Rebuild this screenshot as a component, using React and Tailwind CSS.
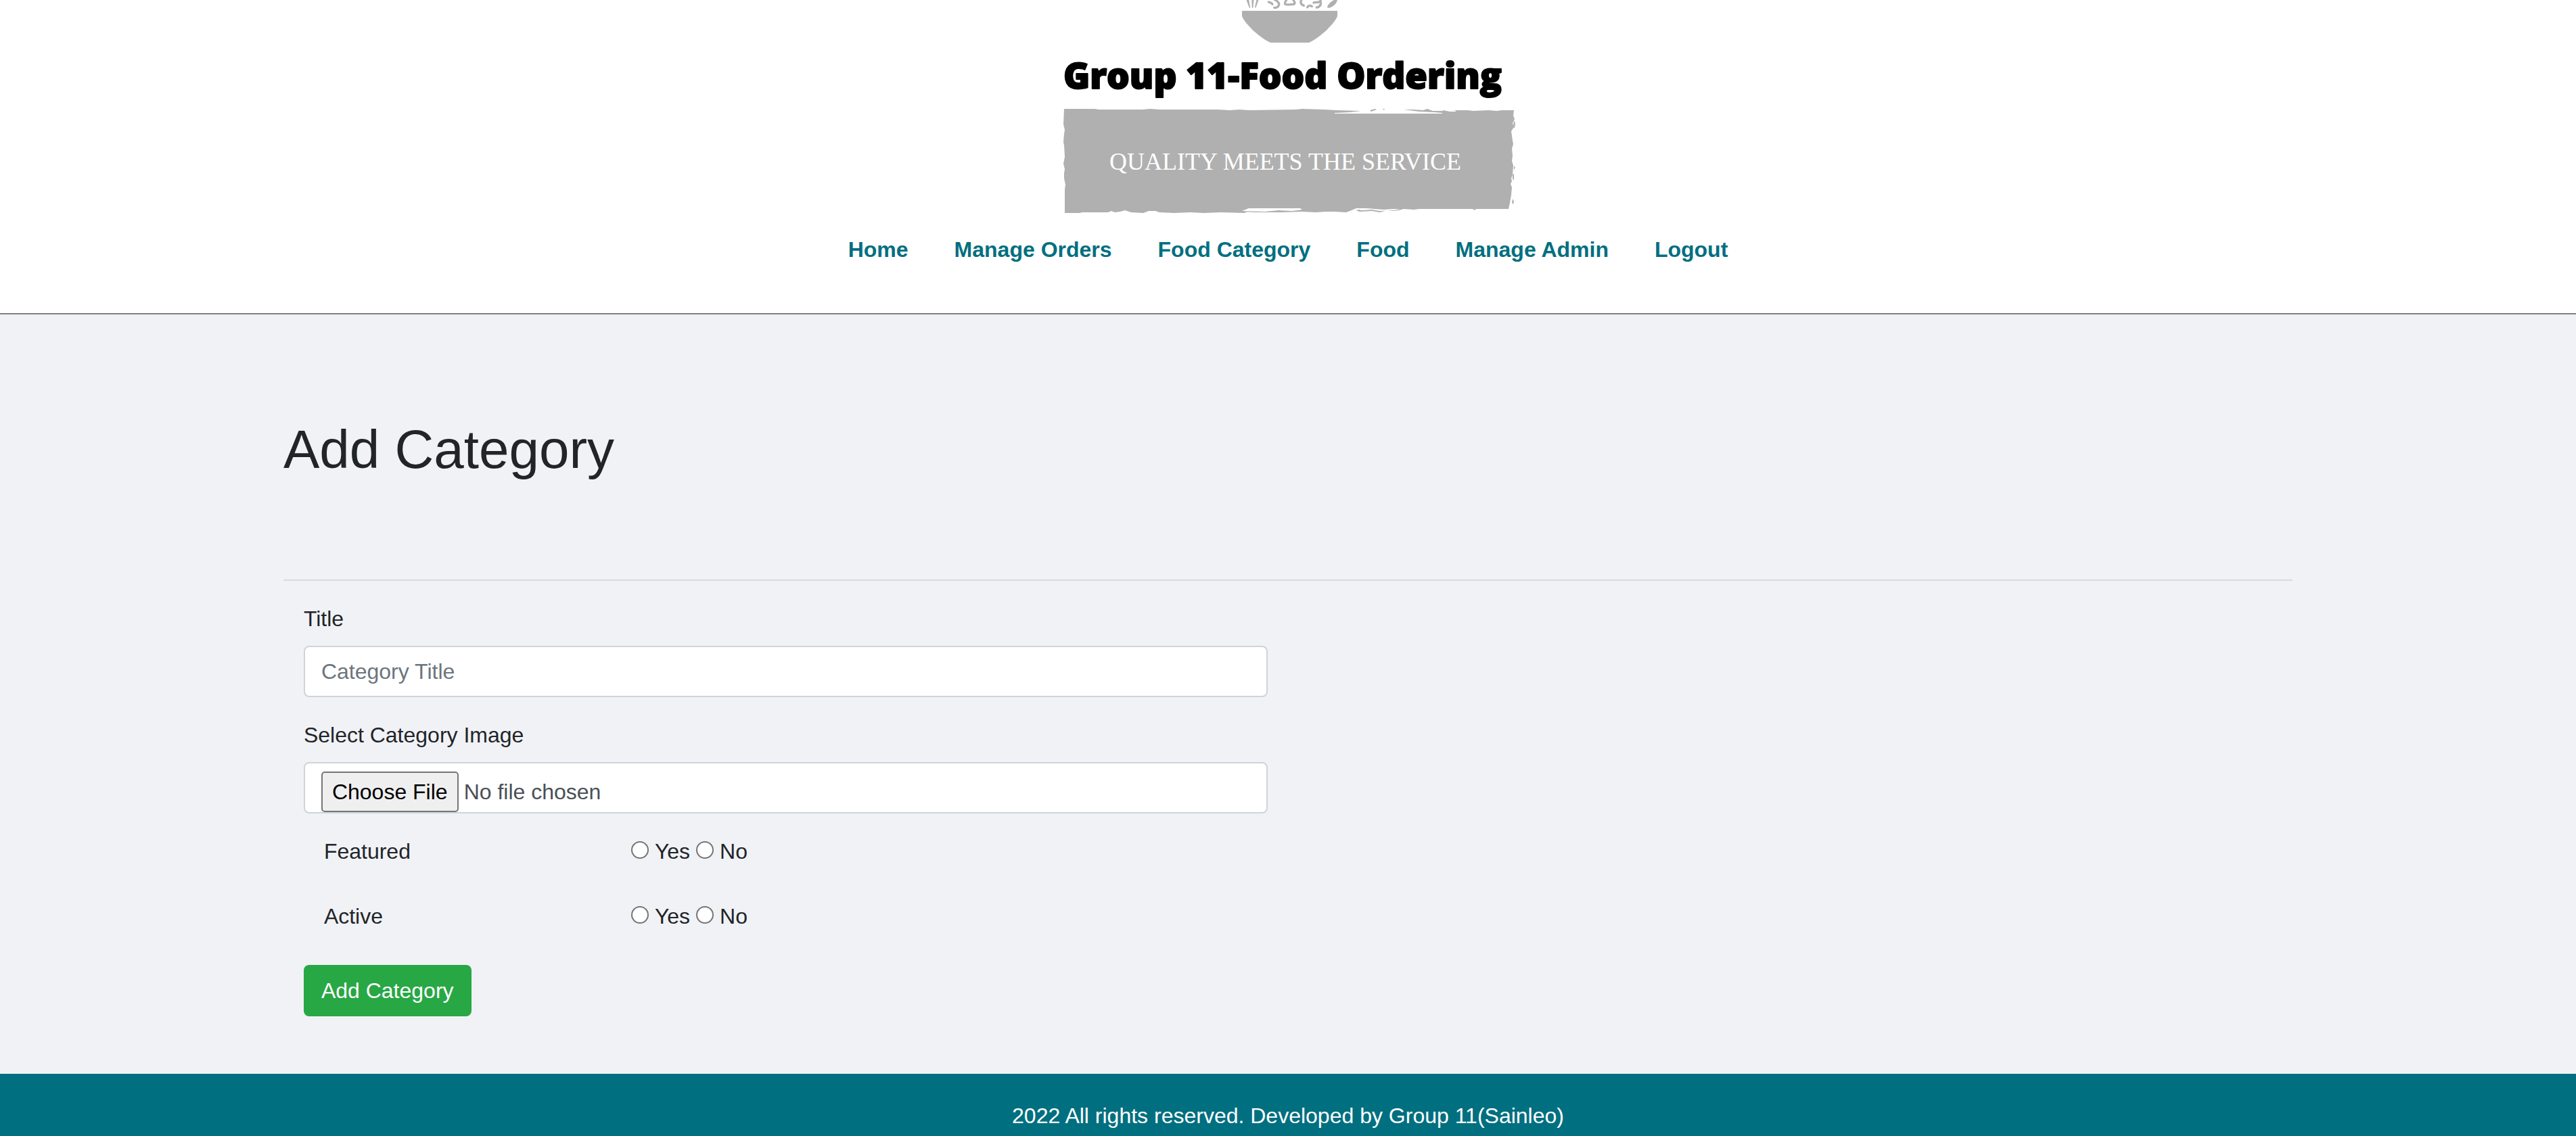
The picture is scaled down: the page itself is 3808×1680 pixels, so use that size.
const navItems = ["Home", "Manage Orders", "Food Category", "Food", "Manage Admin", "Logout"];

function Logo() {
  return (
    <svg width="700" height="320" viewBox="1554 0 700 320" role="img" aria-label="Group 11-Food Ordering, quality meets the service" className="block max-w-full">
      {/* bowl and the food above it */}
      <path fill="#b0b0b0" d="M1836 16H1977V24C1973 34 1954 54 1935 63H1878C1859 54 1840 34 1836 24Z" />
      <g transform="translate(1820 0) scale(.3333)" fill="#b0b0b0">
        <path d="M66 -4H78L85 36L80 34ZM91 -4H101L97 36L92 34ZM113 -4H123L109 35L105 32Z" />
        <path d="M426 34C428 16 448 2 471 -6C472 12 455 30 434 35Z" />
        <g fill="none" stroke="#b0b0b0" strokeWidth="10" strokeLinecap="round">
          <path d="M166 9L178 13L183 19" />
          <path d="M192 -2C204 4 216 12 211 24C208 32 200 35 191 34" />
          <path d="M247 -4C242 6 234 14 240 19C250 24 268 18 278 19C287 14 278 4 273 -4" />
          <path d="M314 -4C306 6 305 18 322 25" />
          <path d="M338 32C342 24 350 23 358 28" />
          <path d="M366 12C378 6 390 16 396 4C400 -2 394 -4 388 -6" />
          <path d="M398 12C397 24 390 32 379 33" />
        </g>
      </g>

      {/* brushed banner */}
      <path
        fill="#b0b0b0"
        d="M1573 161L1618 161L1625 162L1688 162L1700 161L1716 162L1800 162L1818 163L1832 162L1846 163L1915 162L1925 161L1958 162L1975 163L2012 164L1996 166L1973 167V168H2132V167L2120 166L2098 165L2075 162L2090 162L2104 163L2110 161L2118 164L2132 164L2134 163L2143 165L2153 165L2150 163L2170 163L2178 164L2200 163L2213 164L2220 163H2238L2237 171L2239 176L2236 182L2238 188L2234 194L2236 208L2237 213L2235 220L2236 230L2235 238L2237 245L2236 258L2234 264L2235 268L2233 272L2235 277L2234 288L2232 300L2230 309H2182L2180 311L2177 309H2098L2090 310L2075 309L2068 311L2058 312L2050 311L2040 314L2028 312L2010 313L2004 311L2015 309L2005 308L1998 311L1990 314L1972 313L1960 313L1945 314L1925 313L1895 314L1855 314L1838 313L1838 311L1846 311L1840 315L1805 314L1780 315L1760 314L1735 315L1714 314L1708 312L1698 312L1690 315L1672 314L1663 311L1656 313L1648 314L1643 312L1638 314L1600 314L1596 315L1574 315V280L1575 273L1573 264V256L1574 250L1572 242L1574 232L1573 215L1572 210L1573 198L1574 192L1572 184Z"
      />
      <path fill="#fff" d="M1846 308H1922L1925 310L1910 312L1890 311L1870 313L1836 312ZM2005 308L2020 308L2032 309L2045 310L2060 309L2070 309L2060 311L2040 312L2028 310L2012 311Z" />
      <path fill="#b0b0b0" d="M2025 163L2033 161L2035 162L2027 165ZM2044 161H2047V162H2044ZM2238 178L2240 182L2239 190L2237 187ZM2238 245L2240 248L2238 251ZM2236 258L2238 257L2238 266L2236 265ZM2236 294L2238 298L2237 302L2235 300Z" />

      <text x="1572" y="131" className="fill-black stroke-black stroke-2 [stroke-linejoin:round] font-['Open_Sans',sans-serif] text-[53px] font-extrabold">
        Group 11-Food Ordering
      </text>
      <text x="1640" y="251" className="fill-white font-['Liberation_Serif',serif] text-[36px]">
        QUALITY MEETS THE SERVICE
      </text>
    </svg>
  );
}

function YesNo({ name, label }) {
  return (
    <div role="radiogroup" aria-label={label} className="flex items-baseline gap-[9px]">
      {["Yes", "No"].map((v) => (
        <label key={v} className="flex items-baseline gap-[9px]">
          <input
            type="radio"
            name={name}
            value={v}
            className="size-[26px] appearance-none rounded-full border-2 border-[#767676] bg-white checked:border-8 checked:border-[#0075ff]"
          />
          {v}
        </label>
      ))}
    </div>
  );
}

export default function App() {
  return (
    <div className="flex min-h-screen flex-col bg-[#f1f2f6] font-['Liberation_Sans',Arial,sans-serif] text-[32px] leading-[48px] text-[#212529]">
      <header className="flex flex-col items-center border-b-2 border-[#808080] bg-white pb-[70px]">
        <Logo />
        <nav className="mt-[25px] flex flex-wrap justify-center gap-x-[68px] font-bold text-[#006f80]">
          {navItems.map((n) => (
            <a key={n} href="#">{n}</a>
          ))}
        </nav>
      </header>

      <main className="mx-[11%] pt-[152px] pb-[85px]">
        <h1 className="text-[80px] leading-[96px]">Add Category</h1>
        <hr className="mt-[144px] border-t-2 border-[#d9dade]" />
        <form className="mt-8 w-1/2 px-[30px]" onSubmit={(e) => e.preventDefault()}>
          <label htmlFor="title" className="block">Title</label>
          <input
            id="title"
            type="text"
            placeholder="Category Title"
            className="mt-4 block h-[76px] w-full rounded-lg border-2 border-[#ced4da] bg-white px-6 placeholder:text-[#6c757d]"
          />
          <label htmlFor="image" className="mt-8 block">Select Category Image</label>
          <input
            id="image"
            type="file"
            className="mt-4 block h-[76px] w-full overflow-hidden rounded-lg border-2 border-[#ced4da] bg-white px-6 pt-3 text-[#495057] file:mr-2 file:h-[60px] file:rounded-[5px] file:border-2 file:border-solid file:border-[#767676] file:bg-[#efefef] file:px-[14px] file:text-black"
          />
          <div className="mt-8 grid grid-cols-[454px_1fr] gap-y-12 px-[30px]">
            <span>Featured</span>
            <YesNo name="featured" label="Featured" />
            <span>Active</span>
            <YesNo name="active" label="Active" />
          </div>
          <button type="submit" className="mt-12 block h-[76px] rounded-lg bg-[#28a745] px-[26px] text-white">
            Add Category
          </button>
        </form>
      </main>

      <footer className="flex-1 bg-[#006f80] pt-[38px] text-center text-white">
        <p>2022 All rights reserved. Developed by Group 11(Sainleo)</p>
      </footer>
    </div>
  );
}
